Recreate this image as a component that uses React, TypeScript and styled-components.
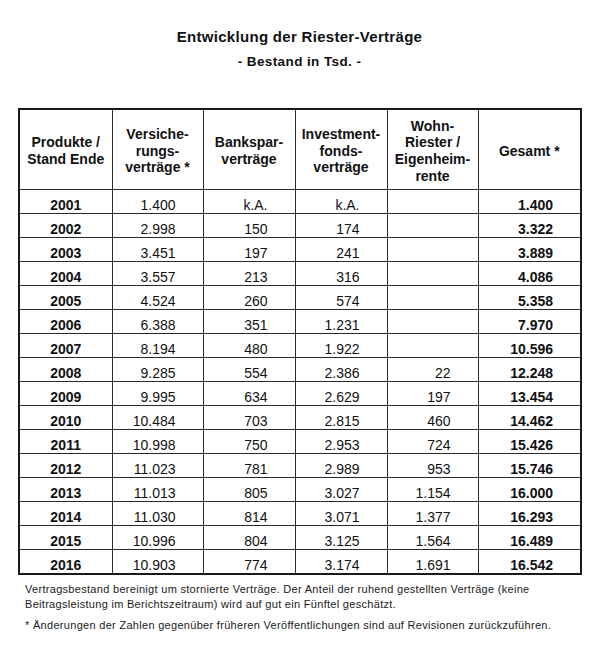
import styled, { createGlobalStyle } from 'styled-components'

const GlobalStyle = createGlobalStyle`
    html, body {
        margin: 0;
        padding: 0;
        background: #ffffff;
    }
    body {
        font-family: "Liberation Sans", Arial, sans-serif;
        color: #111111;
    }
`

const Page = styled.div`
    width: 600px;
    padding: 27px 0 0 18px;
    box-sizing: border-box;
`

const Heading = styled.header`
    width: 563px;
    text-align: center;
    margin-bottom: 37px;
`

const Title = styled.h1`
    margin: 0;
    font-size: 15px;
    letter-spacing: 0.3px;
    line-height: 20px;
    font-weight: bold;
`

const Subtitle = styled.h2`
    margin: 6px 0 0;
    font-size: 13.5px;
    letter-spacing: 0.4px;
    line-height: 18px;
    font-weight: bold;
`

const Table = styled.table`
    width: 563px;
    table-layout: fixed;
    border-collapse: collapse;
    border: 2px solid #1a1a1a;
    font-size: 14px;
`

const HeadCell = styled.th`
    height: 76px;
    padding: 3px 2px 0;
    border: 1px solid #2a2a2a;
    font-weight: bold;
    line-height: 16.7px;
    text-align: center;
    vertical-align: middle;
`

const YearCell = styled.td`
    height: 16px;
    padding: 7px 0 0;
    border: 1px solid #2a2a2a;
    font-weight: bold;
    text-align: center;
    vertical-align: top;
    line-height: 16px;
`

const NumCell = styled.td<{ $bold?: boolean }>`
    height: 16px;
    padding: 7px 27px 0 0;
    border: 1px solid #2a2a2a;
    font-weight: ${p => (p.$bold ? 'bold' : 'normal')};
    text-align: right;
    vertical-align: top;
    line-height: 16px;
`

const Notes = styled.div`
    margin: 7px 0 0 7px;
    font-size: 11px;
    letter-spacing: 0.3px;
    line-height: 15px;
    color: #1a1a1a;
`

const Note = styled.p`
    margin: 0 0 6px;
`

const widths = [93, 91, 92, 92, 91, 103]

const heads = [
    ['Produkte /', 'Stand Ende'],
    ['Versiche-', 'rungs-', 'verträge *'],
    ['Bankspar-', 'verträge'],
    ['Investment-', 'fonds-', 'verträge'],
    ['Wohn-', 'Riester /', 'Eigenheim-', 'rente'],
    ['Gesamt *'],
]

const rows: string[][] = [
    ['2001', '1.400', 'k.A.', 'k.A.', '', '1.400'],
    ['2002', '2.998', '150', '174', '', '3.322'],
    ['2003', '3.451', '197', '241', '', '3.889'],
    ['2004', '3.557', '213', '316', '', '4.086'],
    ['2005', '4.524', '260', '574', '', '5.358'],
    ['2006', '6.388', '351', '1.231', '', '7.970'],
    ['2007', '8.194', '480', '1.922', '', '10.596'],
    ['2008', '9.285', '554', '2.386', '22', '12.248'],
    ['2009', '9.995', '634', '2.629', '197', '13.454'],
    ['2010', '10.484', '703', '2.815', '460', '14.462'],
    ['2011', '10.998', '750', '2.953', '724', '15.426'],
    ['2012', '11.023', '781', '2.989', '953', '15.746'],
    ['2013', '11.013', '805', '3.027', '1.154', '16.000'],
    ['2014', '11.030', '814', '3.071', '1.377', '16.293'],
    ['2015', '10.996', '804', '3.125', '1.564', '16.489'],
    ['2016', '10.903', '774', '3.174', '1.691', '16.542'],
]

export default function App() {
    return (
        <Page>
            <GlobalStyle />
            <Heading>
                <Title>Entwicklung der Riester-Verträge</Title>
                <Subtitle>- Bestand in Tsd. -</Subtitle>
            </Heading>
            <Table>
                <colgroup>
                    {widths.map((w, i) => <col key={i} style={{ width: w }} />)}
                </colgroup>
                <thead>
                    <tr>
                        {heads.map((lines, i) => (
                            <HeadCell key={i}>
                                {lines.map((l, j) => <div key={j}>{l}</div>)}
                            </HeadCell>
                        ))}
                    </tr>
                </thead>
                <tbody>
                    {rows.map(r => (
                        <tr key={r[0]}>
                            <YearCell>{r[0]}</YearCell>
                            {r.slice(1).map((v, i) => (
                                <NumCell key={i} $bold={i === 4}>{v}</NumCell>
                            ))}
                        </tr>
                    ))}
                </tbody>
            </Table>
            <Notes>
                <Note>
                    Vertragsbestand bereinigt um stornierte Verträge. Der Anteil der ruhend gestellten Verträge (keine
                    <br />
                    Beitragsleistung im Berichtszeitraum) wird auf gut ein Fünftel geschätzt.
                </Note>
                <Note>* Änderungen der Zahlen gegenüber früheren Veröffentlichungen sind auf Revisionen zurückzuführen.</Note>
            </Notes>
        </Page>
    )
}
